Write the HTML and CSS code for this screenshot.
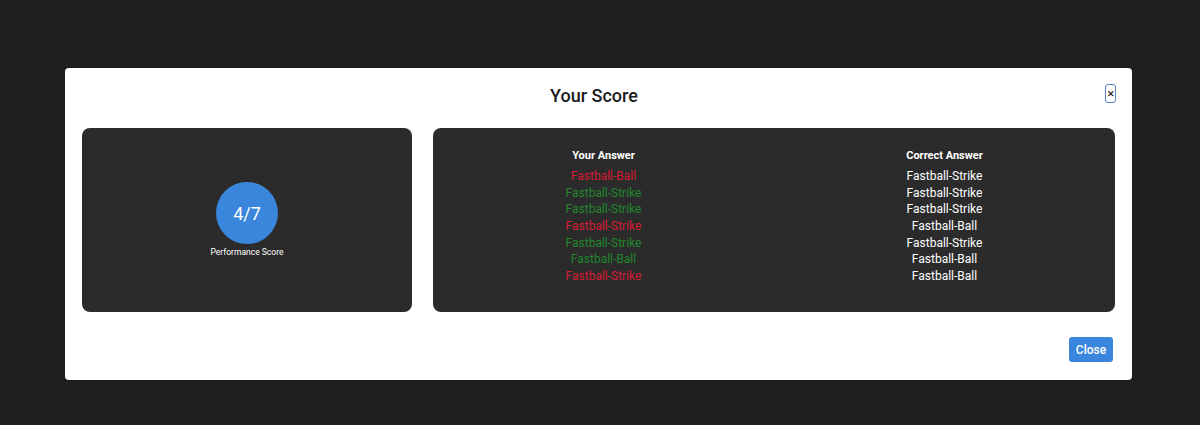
FILE: index.html
```html
<!DOCTYPE html>
<html>
<head>
<meta charset="utf-8">
<link rel="stylesheet" href="styles.css">
</head>
<body>
<div class="modal">
  <div class="modal-header">
    <h2 class="title">Your Score</h2>
    <button class="x-btn" aria-label="Close">&#x2715;</button>
  </div>
  <div class="modal-body">
    <div class="panel score-panel">
      <div class="circle">4/7</div>
      <div class="score-label">Performance Score</div>
    </div>
    <div class="panel answers-panel">
      <div class="answers">
        <div class="head">Your Answer</div>
        <div class="head">Correct Answer</div>
        <div class="wrong">Fastball-Ball</div><div class="correct">Fastball-Strike</div>
        <div class="right">Fastball-Strike</div><div class="correct">Fastball-Strike</div>
        <div class="right">Fastball-Strike</div><div class="correct">Fastball-Strike</div>
        <div class="wrong">Fastball-Strike</div><div class="correct">Fastball-Ball</div>
        <div class="right">Fastball-Strike</div><div class="correct">Fastball-Strike</div>
        <div class="right">Fastball-Ball</div><div class="correct">Fastball-Ball</div>
        <div class="wrong">Fastball-Strike</div><div class="correct">Fastball-Ball</div>
      </div>
    </div>
  </div>
  <div class="modal-footer">
    <button class="close-btn">Close</button>
  </div>
</div>
</body>
</html>
```
FILE: styles.css
```css
html, body {
  margin: 0;
  padding: 0;
  background: #1f1f1f;
  font-family: Roboto, "Liberation Sans", Arial, sans-serif;
  height: 425px;
  overflow: hidden;
}
.modal {
  position: relative;
  margin: 68px 0 0 65px;
  width: 1067px;
  height: 312px;
  background: #ffffff;
  border-radius: 4px;
  box-sizing: border-box;
  display: flex;
  flex-direction: column;
}
.modal-header {
  position: relative;
  height: 60px;
  box-sizing: border-box;
  padding: 16px 9px 0 0;
  text-align: center;
}
.title {
  margin: 0;
  font-size: 18px;
  line-height: 24px;
  font-weight: 500;
  color: #1b1b1b;
}
.x-btn {
  position: absolute;
  top: 16px;
  right: 16px;
  width: 11px;
  height: 19px;
  padding: 0;
  border: 1.5px solid #5a7dc4;
  border-radius: 3px;
  background: #fff;
  color: #333;
  font-size: 9px;
  font-weight: 700;
  line-height: 16px;
  text-align: center;
  box-sizing: border-box;
}
.modal-body {
  display: flex;
  gap: 21px;
  padding: 0 17px;
  height: 184px;
}
.panel {
  background: #2b2b2b;
  border-radius: 8px;
  box-sizing: border-box;
}
.score-panel {
  width: 330px;
  flex: none;
  display: flex;
  flex-direction: column;
  align-items: center;
  justify-content: center;
}
.circle {
  width: 62px;
  height: 62px;
  border-radius: 50%;
  background: #3a86dc;
  color: #fff;
  font-size: 18px;
  display: flex;
  align-items: center;
  justify-content: center;
}
.score-label {
  margin-top: 3px;
  font-size: 8.5px;
  line-height: 11px;
  color: #fff;
}
.answers-panel {
  flex: 1;
  padding-top: 20px;
}
.answers {
  display: grid;
  grid-template-columns: 1fr 1fr;
  text-align: center;
  font-size: 12px;
  line-height: 16.67px;
}
.head {
  color: #fff;
  font-weight: 700;
  font-size: 11px;
  line-height: 16px;
  margin-bottom: 4px;
}
.wrong { color: #d71b33; }
.right { color: #22862c; }
.correct { color: #ffffff; }
.modal-footer {
  display: flex;
  justify-content: flex-end;
  padding: 25px 19px 0 0;
}
.close-btn {
  width: 44px;
  height: 25px;
  background: #3a86dc;
  color: #fff;
  border: none;
  border-radius: 3px;
  font-family: Roboto, "Liberation Sans", Arial, sans-serif;
  font-size: 12px;
  font-weight: 500;
  padding: 0;
}
```
